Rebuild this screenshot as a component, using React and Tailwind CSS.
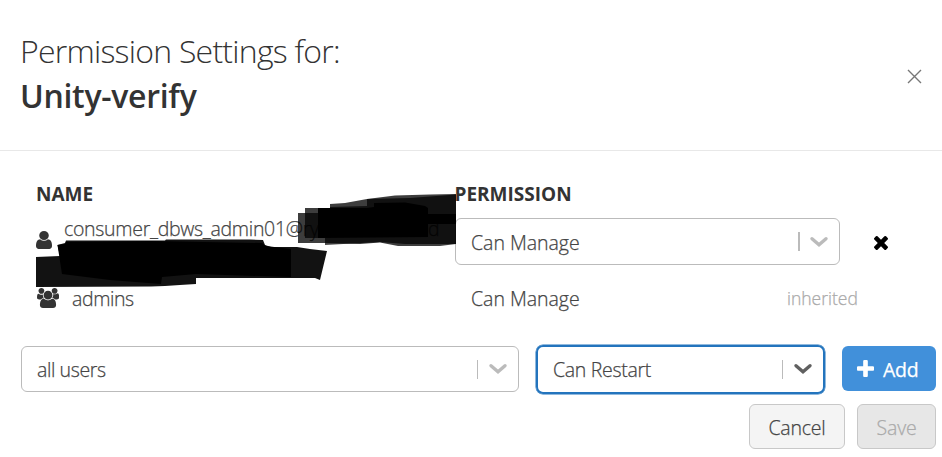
import React from "react";

const Chevron = ({ className }) => (
  <svg width="20" height="14" viewBox="0 0 20 14" fill="none" className={className}>
    <path d="M3 3.7 10 9.7 17 3.7" stroke="currentColor" strokeWidth="3.4" strokeLinecap="round" strokeLinejoin="miter" />
  </svg>
);

const UserIcon = () => (
  <svg className="mb-[3px]" width="16" height="18" viewBox="0 128 1280 1536" preserveAspectRatio="none" fill="currentColor">
    <path d="M1280 1399q0 109-62.5 187t-150.5 78h-854q-88 0-150.5-78t-62.5-187q0-85 8.5-160.5t31.5-152 58.5-131 94-89 134.5-34.5q131 128 313 128t313-128q76 0 134.5 34.5t94 89 58.5 131 31.5 152 8.5 160.5zm-256-887q0 159-112.5 271.5t-271.5 112.5-271.5-112.5-112.5-271.5 112.5-271.5 271.5-112.5 271.5 112.5 112.5 271.5z" />
  </svg>
);

const UsersIcon = () => (
  <svg className="mb-[1px]" width="22" height="20" viewBox="0 0 1920 1792" preserveAspectRatio="none" fill="currentColor">
    <path d="M593 896q-162 5-265 128h-134q-82 0-138-40.5t-56-118.5q0-353 124-353 6 0 43.5 21t97.5 42.5 119 21.5q67 0 133-23-5 37-5 66 0 159 93 292zm1071 637q0 120-73 189.5t-194 69.5h-874q-121 0-194-69.5t-73-189.5q0-53 3.5-103.5t14-109 26.5-108.5 43-97.5 62-81 85.5-53.5 111.5-20q10 0 43 21.5t73 48 107 48 135 21.5 135-21.5 107-48 73-48 43-21.5q61 0 111.5 20t85.5 53.5 62 81 43 97.5 26.5 108.5 14 109 3.5 103.5zm-1024-1277q0 106-75 181t-181 75-181-75-75-181 75-181 181-75 181 75 75 181zm704 384q0 159-112.5 271.5t-271.5 112.5-271.5-112.5-112.5-271.5 112.5-271.5 271.5-112.5 271.5 112.5 112.5 271.5zm576 225q0 78-56 118.5t-138 40.5h-134q-103-123-265-128 93-133 93-292 0-29-5-66 66 23 133 23 59 0 119-21.5t97.5-42.5 43.5-21q124 0 124 353zm-128-609q0 106-75 181t-181 75-181-75-75-181 75-181 181-75 181 75 75 181z" />
  </svg>
);

const RemoveIcon = () => (
  <svg width="14" height="14" viewBox="302 366 1188 1188" fill="black">
    <path d="M1490 1322q0 40-28 68l-136 136q-28 28-68 28t-68-28l-294-294-294 294q-28 28-68 28t-68-28l-136-136q-28-28-28-68t28-68l294-294-294-294q-28-28-28-68t28-68l136-136q28-28 68-28t68 28l294 294 294-294q28-28 68-28t68 28l136 136q28 28 28 68t-28 68l-294 294 294 294q28 28 28 68z" />
  </svg>
);

const PlusIcon = () => (
  <svg width="17" height="17" viewBox="0 128 1408 1408" fill="currentColor">
    <path d="M1408 736v192q0 40-28 68t-68 28h-416v416q0 40-28 68t-68 28h-192q-40 0-68-28t-28-68v-416h-416q-40 0-68-28t-28-68v-192q0-40 28-68t68-28h416v-416q0-40 28-68t68-28h192q40 0 68 28t28 68v416h416q40 0 68 28t28 68z" />
  </svg>
);

const Scribble = () => (
  <svg className="absolute left-0 top-0" width="460" height="300" viewBox="0 0 460 300">
    <g fill="black">
      <path fillOpacity="0.76" d="M298 213H305V208H330V204L345 203 367 199 395 195.500 430 194.500 456 194V244L440 246H398L380 242.500 360 244 325 243H298Z" />
      <path fillOpacity="0.72" d="M305 213H318V208H330V207L367 206V199L410 198 456 194.500V244H405L380 242 325 245V238H305Z" />
      <path d="M318 208H367L374 207V203L405 202.500 425 206 428 208V214H456V224H428V237L318 238Z" />
      <path fillOpacity="0.93" d="M36 257 60 256 57.500 245 65 243 66 240.500 165 240.500 166 239.500 200 239.500H250L263 240 265 245 271 247 297 247 310 249 327 251 320 280 315 278H196V284L180 285 165 286 151 286.500 36 287Z" />
      <path d="M57.500 245 65 244 66 242 150 241 262 243 266 246 291 249V277L196 274 162 277 161 284 110 280 62 274Z" />
    </g>
  </svg>
);

export default function App() {
  return (
    <div className="relative h-[457px] w-[942px] overflow-hidden bg-white font-['Open_Sans','Noto_Sans',sans-serif] text-[19.5px] font-light text-[#444] [-webkit-text-stroke:0.25px]">
      <header className="flex h-[151px] items-start justify-between border-b border-[#e8e8e8] pl-[20px] pr-[20px] pt-[28px] text-[#333] [-webkit-text-stroke:0]">
        <h1 className="text-[32px] leading-[45px]">
          <span className="block whitespace-nowrap font-light tracking-[-0.76px]">Permission Settings for:</span>
          <span className="block whitespace-nowrap font-semibold tracking-[-0.3px]">Unity-verify</span>
        </h1>
        <svg className="mt-[41px]" width="15" height="15" viewBox="0 0 15 15" fill="none">
          <path d="M1 1 14 14M14 1 1 14" stroke="#777" strokeWidth="1.4" />
        </svg>
      </header>

      <main>
        <div className="flex h-[67px] pl-[36px] pt-[30px] text-[19px] font-bold leading-[26px] text-[#333] [-webkit-text-stroke:0]">
          <div className="w-[418.500px]">NAME</div>
          <div>PERMISSION</div>
        </div>
        <div className="flex h-[47px] items-center">
          <div className="flex w-[455px] items-center pl-[36px]">
            <span className="text-[#333]"><UserIcon /></span>
            <div className="-mt-[25px] ml-[12px] flex whitespace-nowrap leading-[26px] tracking-[-0.3px]">
              <span className="w-[364px]">consumer_dbws_admin01@ry</span>
              <span>d</span>
            </div>
          </div>
          <div className="flex h-[47px] w-[385px] items-center rounded-[6px] border border-[#bbb] pl-[15px] pr-[10px]">
            <span className="flex-1 pt-[2px] tracking-[-0.02px]">Can Manage</span>
            <span className="mr-[9px] h-[19px] w-[2px] bg-[#bbb]" />
            <Chevron className="text-[#bbb]" />
          </div>
          <div className="ml-[34px] pt-[2px]"><RemoveIcon /></div>
        </div>
        <div className="flex h-[67px] items-center">
          <div className="flex w-[471px] items-center gap-[13px] pl-[37px]">
            <span className="text-[#333]"><UsersIcon /></span>
            <span className="pt-[1px] tracking-[-0.4px]">admins</span>
          </div>
          <span className="w-[316px] pt-[1px] tracking-[-0.02px]">Can Manage</span>
          <span className="text-[17.500px] text-[#aaa]">inherited</span>
        </div>
      </main>

      <div className="flex h-[74px] items-center pl-[21px]">
        <div className="flex h-[46px] w-[498px] items-center rounded-[6px] border border-[#bbb] pl-[15px] pr-[10px]">
          <span className="flex-1 pt-[2px] tracking-[-0.4px]">all users</span>
          <span className="mr-[10px] h-[19px] w-px bg-[#bbb]" />
          <Chevron className="text-[#bbb]" />
        </div>
        <div className="ml-[17px] flex h-[49px] w-[289px] items-center rounded-[7px] border-[2px] border-[#2374bd] pl-[15px] pr-[10px] shadow-[0_0_0_0.5px_#2374bd]">
          <span className="flex-1 pt-[2px] tracking-[-0.3px]">Can Restart</span>
          <span className="mr-[10px] h-[19px] w-px bg-[#bbb]" />
          <Chevron className="text-[#606060]" />
        </div>
        <button className="ml-[17px] flex h-[45px] w-[94px] items-center gap-[9px] rounded-[6px] bg-[#4190da] pl-[15px] font-medium text-white -mt-[1px]">
          <PlusIcon />
          <span className="pt-[2px] tracking-[-0.3px]">Add</span>
        </button>
      </div>
      <footer className="-mt-[2px] flex justify-end gap-[12px] pr-[6px]">
        <button className="h-[45px] w-[96px] rounded-[6px] border border-[#c8c8c8] bg-[#f4f4f4] pt-[2px] tracking-[-0.2px]">Cancel</button>
        <button className="h-[45px] w-[79px] rounded-[6px] border border-[#c8c8c8] bg-[#e7e7e7] pt-[2px] tracking-[-0.2px] text-[#aaa]">Save</button>
      </footer>
      <Scribble />
    </div>
  );
}
